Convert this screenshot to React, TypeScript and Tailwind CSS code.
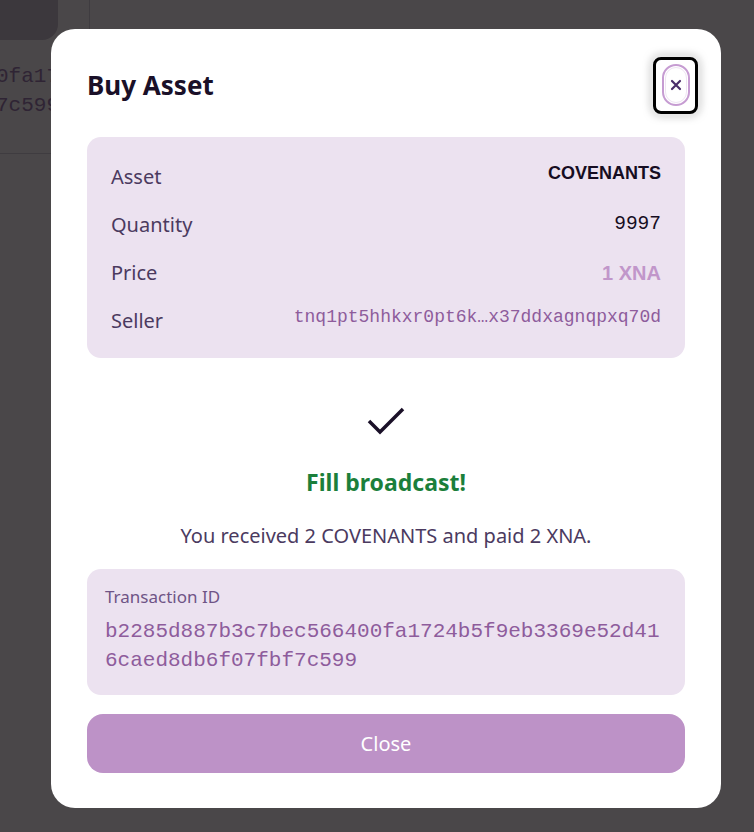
import React from "react";

const sans = { fontFamily: '"Noto Sans", "Open Sans", sans-serif' };

export default function App() {
  return (
    <div className="relative w-[754px] h-[832px] overflow-hidden bg-[#4a4749]" style={sans}>
      {/* background page (dimmed) */}
      <div className="absolute inset-0 flex items-start">
        <div className="w-[90px] border-r border-[#3f3c40] flex flex-col">
          <div className="h-[40px] w-[58px] rounded-br-[16px] bg-[#3c383d]" />
          <div className="h-[114px] border-b border-[#3f3c40] pt-[22px] font-['Liberation_Mono',monospace] text-[21px] leading-[29px] text-[#2f2434] whitespace-nowrap overflow-hidden">
            <div className="-ml-[4px]">0fa17</div>
            <div className="-ml-[4px]">7c599</div>
          </div>
        </div>
      </div>

      {/* modal */}
      <div className="absolute left-[51px] top-[29px] w-[670px] h-[779px] rounded-[24px] bg-white px-[36px] pt-[28px] flex flex-col">
        <div className="flex items-center justify-between h-[56px]">
          <h2 className="text-[26px] font-bold text-[#1a1028] leading-none">Buy Asset</h2>
          <div className="mr-[-13px] w-[45px] h-[57px] rounded-[8px] border-[3px] border-black bg-white shadow-[0_0_6px_2px_rgba(255,255,255,0.9),0_0_10px_rgba(0,0,0,0.5)] flex items-center justify-center">
            <button className="w-[28px] h-[42px] rounded-full border-2 border-[#c69cd2] bg-white flex items-center justify-center">
              <div className="w-[22px] h-[36px] rounded-full border border-[#efe4f3] flex items-center justify-center">
                <svg width="12" height="12" viewBox="0 0 12 12">
                  <path d="M2 2 L10 10 M10 2 L2 10" stroke="#4a2d6a" strokeWidth="2.2" strokeLinecap="round" />
                </svg>
              </div>
            </button>
          </div>
        </div>

        <div className="mt-[24px] rounded-[14px] bg-[#ece2f0] px-[24px] pt-[20px] pb-[17px] flex flex-col gap-[8px]">
          <div className="h-[40px] flex items-center justify-between">
            <span className="text-[20px] text-[#4b3a5f]">Asset</span>
            <span className="font-['Liberation_Sans',Arial,sans-serif] font-bold text-[18px] text-[#160d22] -mt-[8px]">COVENANTS</span>
          </div>
          <div className="h-[40px] flex items-center justify-between">
            <span className="text-[20px] text-[#4b3a5f]">Quantity</span>
            <span className="font-['Liberation_Mono',monospace] text-[19.5px] text-[#160d22]">9997</span>
          </div>
          <div className="h-[40px] flex items-center justify-between">
            <span className="text-[20px] text-[#4b3a5f]">Price</span>
            <span className="font-['Liberation_Sans',Arial,sans-serif] font-bold text-[20px] text-[#c196ca]">1 XNA</span>
          </div>
          <div className="h-[40px] flex items-center justify-between">
            <span className="text-[20px] text-[#4b3a5f]">Seller</span>
            <span className="font-['Liberation_Mono',monospace] text-[18px] text-[#8e5c9c] -mt-[8px]">tnq1pt5hhkxr0pt6k…x37ddxagnqpxq70d</span>
          </div>
        </div>

        <div className="mt-[48px] flex justify-center">
          <svg width="40" height="32" viewBox="0 0 40 32">
            <path d="M3 15 L14 26 L37 3" fill="none" stroke="#1a1028" strokeWidth="3.5" strokeLinecap="butt" strokeLinejoin="miter" />
          </svg>
        </div>

        <div className="mt-[29px] text-center text-[23px] font-bold text-[#1b7f3b] leading-[30px]">Fill broadcast!</div>
        <div className="mt-[26px] text-center text-[20px] text-[#4b3a5f] leading-[26px]">You received 2 COVENANTS and paid 2 XNA.</div>

        <div className="mt-[20px] rounded-[14px] bg-[#ece2f0] px-[18px] pt-[17px] pb-[20px]">
          <div className="text-[17px] text-[#6f5486] leading-[22px]">Transaction ID</div>
          <div className="mt-[9px] font-['Liberation_Mono',monospace] text-[21px] leading-[29px] text-[#8e5c9c] break-all">
            b2285d887b3c7bec566400fa1724b5f9eb3369e52d416caed8db6f07fbf7c599
          </div>
        </div>

        <button className="mt-[19px] h-[59px] w-full rounded-[16px] bg-[#bd92c7] text-white text-[20px]">Close</button>
      </div>
    </div>
  );
}
